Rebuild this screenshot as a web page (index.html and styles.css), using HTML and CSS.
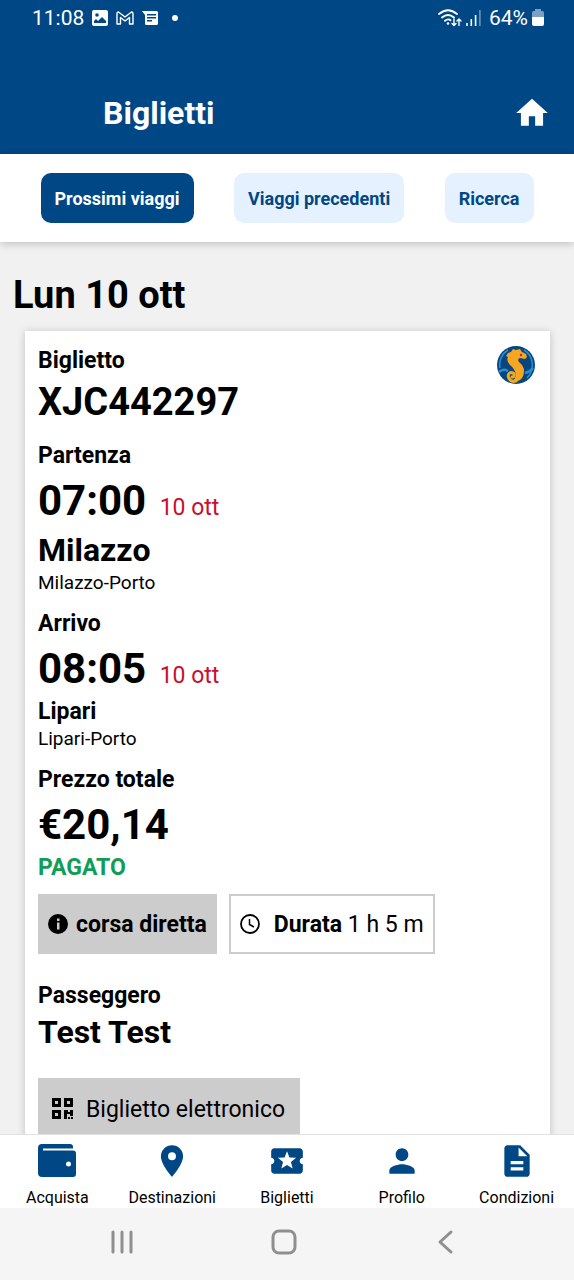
FILE: index.html
```
<!DOCTYPE html>
<html lang="it">
<head>
    <meta charset="UTF-8">
    <meta name="viewport" content="width=device-width, initial-scale=1.0">
    <title>Biglietti</title>
    <link rel="stylesheet" href="styles.css">
</head>
<body>
    <header class="header">
        <div class="status-bar">
            <span class="status-time">11:08</span>
            <svg class="status-icon" width="16" height="16" viewBox="0 0 16 16">
                <path fill="#fff" fill-rule="evenodd" d="M2 0h12a2 2 0 0 1 2 2v12a2 2 0 0 1-2 2H2a2 2 0 0 1-2-2V2a2 2 0 0 1 2-2zm0 13h12v-2l-4-4-4 4-2-2-2 2zM5 3.200a1.800 1.800 0 1 0 0 3.600 1.800 1.800 0 0 0 0-3.600z"/>
            </svg>
            <svg class="status-icon" width="18" height="14" viewBox="0 0 18 14">
                <path fill="none" stroke="#fff" stroke-width="1.400" stroke-linejoin="round" d="M1 13V2.500Q1 1 2.500 1L9 6l6.500-5Q17 1 17 2.500V13h-3.500V6.500L9 10 4.500 6.500V13z"/>
            </svg>
            <svg class="status-icon" width="16" height="14" viewBox="0 0 16 14">
                <path fill="#fff" fill-rule="evenodd" d="M0 0h14.500Q16 0 16 1.500v11Q16 14 14.500 14h-10Q3 14 3 12.500V4zm5 3v1.500h9V3zm0 3v1.500h9V6zm0 3v1.500h5V9z"/>
            </svg>
            <span class="status-dot"></span>
            <div class="status-right">
                <svg width="24" height="18" viewBox="0 0 24 18">
                    <g fill="none" stroke="#fff" stroke-width="1.800" stroke-linecap="round">
                        <path d="M1 5Q10-2.500 19 5M4 8.500q6-5 12 0M7 11.800q3-2.500 5.500-.5"/>
                        <path stroke-width="1.400" d="M16 10v6.500m-2-2 2 2 2-2M21 16.500V10m-2 2 2-2 2 2"/>
                    </g>
                    <circle cx="10" cy="14.500" r="1.300" fill="#fff"/>
                </svg>
                <svg width="15" height="16" viewBox="0 0 15 16">
                    <path stroke="#fff" stroke-width="1.600" d="M1 13v3M5.300 9v7M9.600 5v11"/>
                    <path stroke="#6f93b8" stroke-width="1.600" d="M13.900 0v16"/>
                </svg>
                <span class="battery-text">64%</span>
                <svg width="12" height="17" viewBox="0 0 12 17">
                    <path fill="#7d9fc0" d="M3 0h6v2h1.500Q12 2 12 4v5H0V4q0-2 1.500-2H3z"/>
                    <path fill="#fff" d="M0 8h12v7q0 2-2 2H2q-2 0-2-2z"/>
                </svg>
            </div>
        </div>
        <div class="toolbar">
            <h1 class="title">Biglietti</h1>
            <a class="home-link" href="#" aria-label="Home">
                <svg width="38" height="38" viewBox="0 0 24 24"><path fill="#fff" d="M10 20v-6h4v6h5v-8h3L12 3 2 12h3v8z"/></svg>
            </a>
        </div>
    </header>

    <div class="tabs">
        <button type="button" class="tab active">Prossimi viaggi</button>
        <button type="button" class="tab">Viaggi precedenti</button>
        <button type="button" class="tab">Ricerca</button>
    </div>

    <main class="content">
        <h2 class="day">Lun 10 ott</h2>
        <article class="ticket">
            <svg class="company-logo" width="40" height="40" viewBox="0 0 40 40">
                <circle cx="20" cy="20" r="19" fill="#07477f"/>
                <path fill="none" stroke="#2a8fd0" stroke-width="1.500" d="M12 5A17 17 0 0 0 4 23M28 5c10 6 11 20 3 28"/>
                <path fill="none" stroke="#2a8fd0" stroke-width="2.500" d="M3 27q4-4 9-1M29 28q5-1 8-5"/>
                <path fill="#f5a623" d="M12 8l3-1 2-3 3 1 4-1 2 3 4 2 1 3-2 2-5-1q-3 1-1 4 5 4 5 9 0 8-7 10.500-4 1.500-6 .5 5-3 4.500-8Q19 24 14 20q-4-4-2-8l-2-1z"/>
                <path fill="none" stroke="#f5a623" stroke-width="3" stroke-linecap="round" d="M20 36c-8 2-10-8-5-8.500 4 0 4 5 1 4.500"/>
                <circle cx="25" cy="10" r="1.200" fill="#c0262c"/>
            </svg>

            <section class="block">
                <h3 class="label">Biglietto</h3>
                <p class="code">XJC442297</p>
            </section>

            <section class="block">
                <h3 class="label">Partenza</h3>
                <p class="time">07:00 <span class="date">10 ott</span></p>
                <p class="place">Milazzo</p>
                <p class="port">Milazzo-Porto</p>
            </section>

            <section class="block">
                <h3 class="label">Arrivo</h3>
                <p class="time">08:05 <span class="date">10 ott</span></p>
                <p class="place-small">Lipari</p>
                <p class="port">Lipari-Porto</p>
            </section>

            <section class="block">
                <h3 class="label">Prezzo totale</h3>
                <p class="time">€20,14</p>
                <p class="paid">PAGATO</p>
            </section>

            <div class="badges">
                <div class="badge badge-filled">
                    <svg width="20" height="20" viewBox="0 0 20 20">
                        <circle cx="10" cy="10" r="10"/>
                        <path fill="#ccc" d="M9 4.500h2.500V7H9zM9 8.500h2.500v7H9z"/>
                    </svg>
                    <strong>corsa diretta</strong>
                </div>
                <div class="badge badge-outline">
                    <svg width="20" height="20" viewBox="0 0 20 20">
                        <circle cx="10" cy="10" r="9" fill="none" stroke="#000" stroke-width="1.800"/>
                        <path fill="none" stroke="#000" stroke-width="1.500" d="M9.500 5v5.500l4.500 2.500"/>
                    </svg>
                    <span><strong>Durata</strong> 1 h 5 m</span>
                </div>
            </div>

            <section class="passenger">
                <h3 class="label">Passeggero</h3>
                <p class="place">Test Test</p>
            </section>

            <button type="button" class="ticket-button">
                <svg width="22" height="22" viewBox="0 0 22 22">
                    <path fill-rule="evenodd" d="M0 0h9v9H0zm3 3v3h3V3zM12 0h9v9h-9zm3 3v3h3V3zM0 12h9v9H0zm3 3v3h3v-3zM12 12h4v2h2v-2h3v6h-3v-2h-3v5h-3zM16 19h2v2h-2zM19 19h2v2h-2z"/>
                </svg>
                Biglietto elettronico
            </button>
        </article>
    </main>

    <nav class="bottom-nav">
        <a class="nav-item" href="#">
            <svg width="38" height="38" viewBox="0 0 38 38">
                <path fill-rule="evenodd" d="M4 2h28q3 0 3 3v1.500H5v2h30q3 0 3 3V32q0 3-3 3H4q-4 0-4-4V6q0-4 4-4zm26.500 17.500a2.500 2.500 0 1 0 0 5 2.500 2.500 0 0 0 0-5z"/>
            </svg>
            Acquista
        </a>
        <a class="nav-item" href="#">
            <svg width="38" height="38" viewBox="0 0 24 24"><path d="M12 2a7 7 0 0 0-7 7c0 5.250 7 13 7 13s7-7.750 7-13a7 7 0 0 0-7-7zm0 9.500a2.500 2.500 0 1 1 0-5 2.500 2.500 0 0 1 0 5z"/></svg>
            Destinazioni
        </a>
        <a class="nav-item" href="#">
            <svg width="38" height="38" viewBox="0 0 24 24"><path d="M20 12c0-1.100.9-2 2-2V6c0-1.100-.9-2-2-2H4c-1.100 0-1.990.9-1.990 2v4c1.100 0 1.990.9 1.990 2s-.89 2-2 2v4c0 1.100.9 2 2 2h16c1.100 0 2-.9 2-2v-4c-1.100 0-2-.9-2-2zm-4.420 4.800L12 14.500l-3.580 2.300 1.080-4.120-3.290-2.690 4.240-.25L12 5.800l1.540 3.950 4.240.25-3.290 2.690z"/></svg>
            Biglietti
        </a>
        <a class="nav-item" href="#">
            <svg width="38" height="38" viewBox="0 0 24 24"><path d="M12 12c2.210 0 4-1.790 4-4s-1.790-4-4-4-4 1.790-4 4 1.790 4 4 4zm0 2c-2.670 0-8 1.340-8 4v2h16v-2c0-2.660-5.330-4-8-4z"/></svg>
            Profilo
        </a>
        <a class="nav-item" href="#">
            <svg width="38" height="38" viewBox="0 0 24 24"><path d="M14 2H6c-1.100 0-1.990.9-1.990 2L4 20c0 1.100.89 2 1.990 2H18c1.100 0 2-.9 2-2V8l-6-6zm2 16H8v-2h8v2zm0-4H8v-2h8v2zm-3-5V3.500L18.500 9H13z"/></svg>
            Condizioni
        </a>
    </nav>

    <div class="system-nav">
        <button type="button" class="system-button" aria-label="Recenti">
            <svg width="26" height="26" viewBox="0 0 26 26"><path d="M4 3v20M13 3v20M22 3v20"/></svg>
        </button>
        <button type="button" class="system-button" aria-label="Schermata Home">
            <svg width="26" height="26" viewBox="0 0 26 26"><rect x="2" y="2" width="22" height="22" rx="6"/></svg>
        </button>
        <button type="button" class="system-button" aria-label="Indietro">
            <svg width="26" height="26" viewBox="0 0 26 26"><path d="M18 3L7 13l11 10"/></svg>
        </button>
    </div>
</body>
</html>
```
FILE: styles.css
```
* {
    box-sizing: border-box;
}
body {
    margin: 0;
    display: flex;
    flex-direction: column;
    height: 100vh;
    overflow: hidden; /* Only the content scrolls */
    background-color: #f1f1f1;
    color: #000;
    font-family: Roboto, "Liberation Sans", sans-serif;
}
h1, h2, h3, p {
    margin: 0;
}
svg {
    display: block;
    flex: none;
}
button {
    border: none;
    font-family: inherit;
}
.header {
    background-color: #004785;
    color: white;
}
.status-bar {
    display: flex;
    align-items: center;
    height: 35px;
    padding: 0 30px 0 32px;
    font-size: 21px;
}
.status-icon {
    margin-left: 8px;
}
.status-dot {
    width: 6px;
    height: 6px;
    margin-left: 14px;
    border-radius: 50%;
    background-color: white;
}
.status-right {
    display: flex;
    align-items: center;
    gap: 4px;
    margin-left: auto;
}
.battery-text {
    margin-left: 4px;
}
.toolbar {
    display: flex;
    align-items: center;
    justify-content: space-between;
    height: 119px;
    padding: 36px 23px 0 103px;
}
.title {
    font-size: 32px;
    font-weight: 700;
}
.tabs {
    display: flex;
    justify-content: space-evenly;
    padding: 19px 0;
    background-color: white;
    box-shadow: 0 2px 8px rgba(0, 0, 0, 0.2);
    z-index: 1;
}
.tab {
    height: 50px;
    padding: 0 14px;
    border-radius: 10px;
    background-color: #e5f1ff;
    color: #004785;
    font-size: 18px;
    font-weight: 700;
}
.tab.active {
    background-color: #004785;
    color: white;
}
.content {
    flex: 1;
    min-height: 0;
    overflow: hidden;
}
.day {
    padding: 31px 13px 13px;
    font-size: 38px;
    line-height: 45px;
    font-weight: 700;
}
.ticket {
    position: relative;
    margin: 0 24px 0 25px;
    padding: 14px 13px 24px;
    background-color: white;
    box-shadow: 0 1px 8px rgba(0, 0, 0, 0.2);
}
.company-logo {
    position: absolute;
    top: 14px;
    right: 14px;
}
.block {
    margin-bottom: 12px;
}
.label {
    font-size: 23px;
    line-height: 32px;
    font-weight: 700;
}
.code {
    font-size: 38px;
    line-height: 51px;
    font-weight: 700;
}
.time {
    font-size: 42px;
    line-height: 58px;
    font-weight: 700;
}
.date {
    margin-left: 3px;
    color: #c8102e;
    font-size: 23px;
    line-height: 32px;
    font-weight: 400;
}
.place {
    font-size: 32px;
    line-height: 40px;
    font-weight: 700;
}
.place-small, .paid {
    font-size: 23px;
    line-height: 28px;
    font-weight: 700;
}
.port {
    font-size: 19px;
    line-height: 26px;
}
.paid {
    color: #0f9d58;
}
.badges {
    display: flex;
    gap: 12px;
    margin-bottom: 26px;
}
.badge {
    display: flex;
    align-items: center;
    height: 60px;
    font-size: 23px;
}
.badge-filled {
    gap: 8px;
    padding: 0 10px;
    background-color: #ccc;
}
.badge-outline {
    gap: 14px;
    padding: 0 9px;
    border: 2px solid #ccc;
}
.passenger {
    margin-bottom: 26px;
}
.ticket-button {
    display: flex;
    align-items: center;
    gap: 12px;
    height: 62px;
    padding: 0 15px 0 14px;
    background-color: #ccc;
    color: #000;
    font-size: 23px;
}
.bottom-nav {
    display: grid;
    grid-template-columns: repeat(5, 1fr);
    border-top: 1px solid #e2e2e2;
    background-color: white;
    z-index: 1;
}
.nav-item {
    display: flex;
    flex-direction: column;
    align-items: center;
    gap: 8px;
    padding-top: 7px;
    color: #000;
    font-size: 16px;
    line-height: 20px;
    text-decoration: none;
}
.nav-item svg {
    fill: #004785;
}
.system-nav {
    display: flex;
    justify-content: space-between;
    align-items: center;
    height: 72px;
    padding: 0 20% 4px 19%;
    background-color: #f5f5f5;
}
.system-button {
    padding: 0;
    background: none;
}
.system-button svg {
    fill: none;
    stroke: #8f8f8f;
    stroke-width: 3;
    stroke-linecap: round;
    stroke-linejoin: round;
}
```
